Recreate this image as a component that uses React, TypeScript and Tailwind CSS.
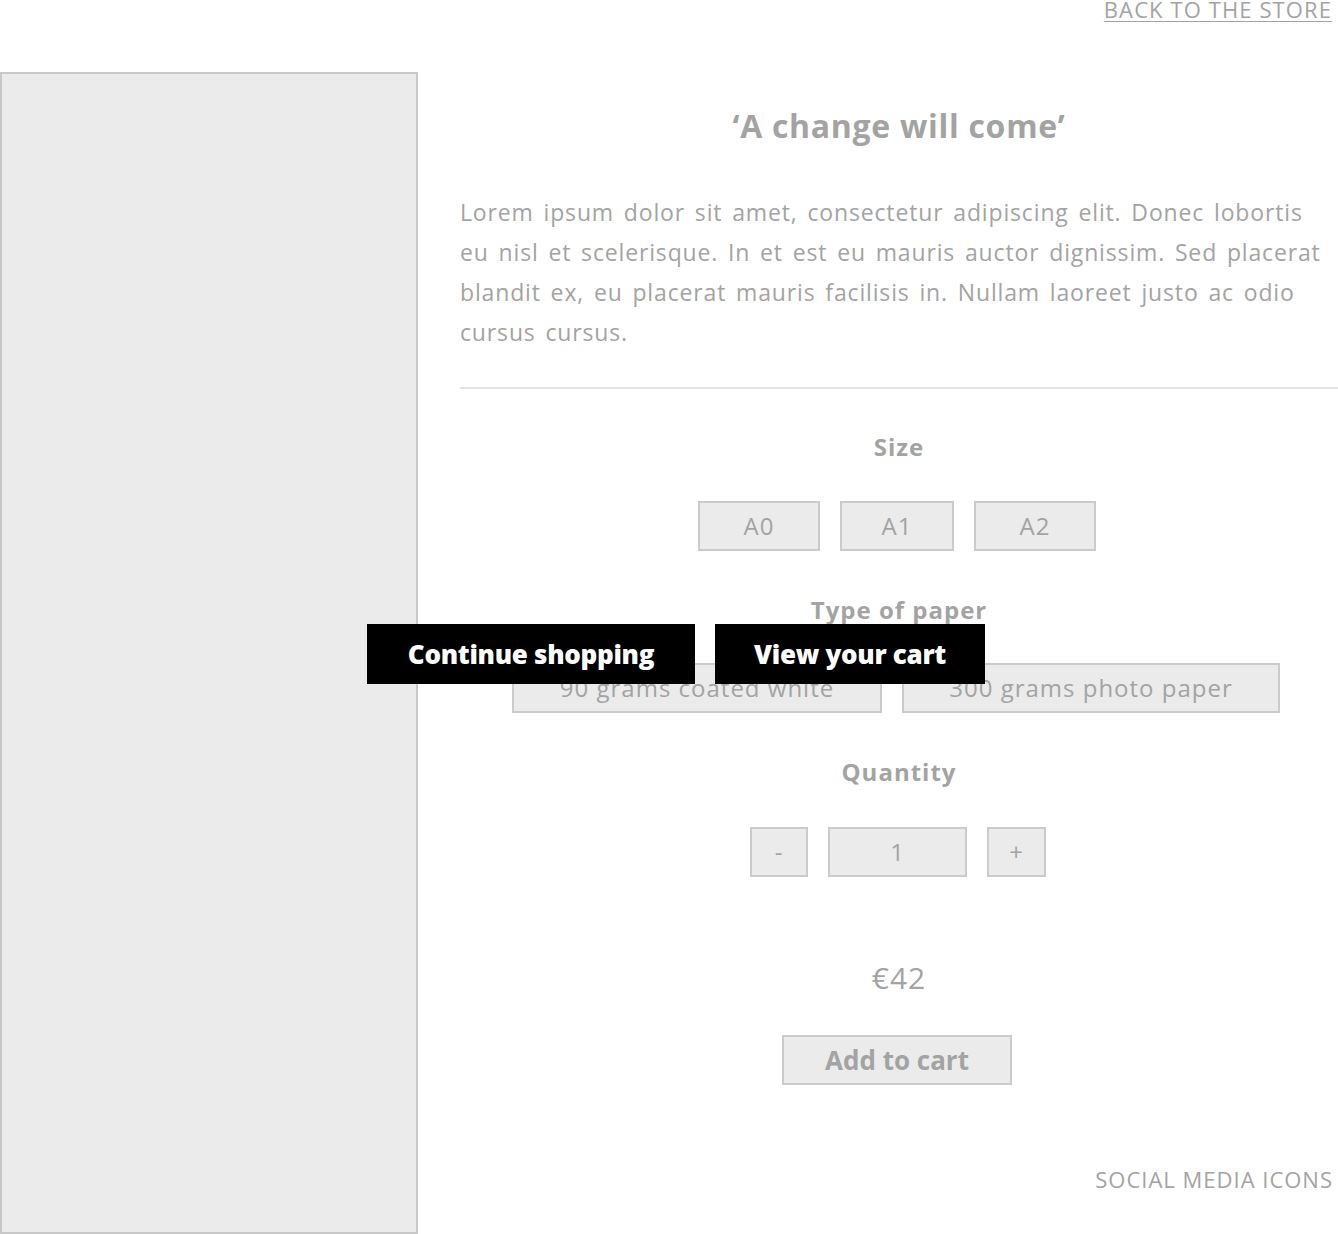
import React from "react";

const font = { fontFamily: '"Open Sans", "Liberation Sans", sans-serif' };

const OptionButton: React.FC<{ label: string; className?: string }> = ({
  label,
  className = "",
}) => (
  <button
    className={`h-[50px] border-2 border-[#cbcbcb] bg-[#ebebeb] text-[24px] tracking-[1px] text-[#a3a3a3] flex items-center justify-center ${className}`}
  >
    {label}
  </button>
);

const SectionLabel: React.FC<{ children: React.ReactNode }> = ({ children }) => (
  <h3 className="text-center text-[24px] font-bold text-[#a3a3a3] leading-none tracking-[1px]">
    {children}
  </h3>
);

export default function App() {
  return (
    <div className="relative w-[1338px] h-[1234px] bg-white overflow-hidden" style={font}>
      <div className="h-[72px] flex justify-end pr-[6px]">
        <a
          href="#"
          className="text-[22px] leading-none uppercase underline underline-offset-[3px] decoration-1 tracking-[1.1px] text-[#a3a3a3] -mt-[2px] h-fit"
        >
          Back to the store
        </a>
      </div>

      <div className="flex">
        <div className="w-[418px] h-[1162px] border-2 border-[#c8c8c8] bg-[#ebebeb] shrink-0" />

        <div className="flex-1 ml-[42px] flex flex-col">
          <h1 className="mt-[38px] text-center text-[32px] font-bold text-[#a3a3a3] leading-none tracking-[0.7px]">
            ‘A change will come’
          </h1>

          <p className="mt-[50px] text-[23px] leading-[40px] tracking-[0.85px] [word-spacing:3px] text-[#a3a3a3]">
            Lorem ipsum dolor sit amet, consectetur adipiscing elit. Donec lobortis eu nisl et
            scelerisque. In et est eu mauris auctor dignissim. Sed placerat blandit ex, eu placerat
            mauris facilisis in. Nullam laoreet justo ac odio cursus cursus.
          </p>

          <div className="mt-[35px] h-[2px] bg-[#e3e3e3]" />

          <div className="mt-[46px]">
            <SectionLabel>Size</SectionLabel>
          </div>
          <div className="mt-[42px] flex justify-center gap-[20px] pr-[4px]">
            <OptionButton label="A0" className="w-[122px]" />
            <OptionButton label="A1" className="w-[114px]" />
            <OptionButton label="A2" className="w-[122px]" />
          </div>

          <div className="mt-[47px]">
            <SectionLabel>Type of paper</SectionLabel>
          </div>
          <div className="mt-[41px] flex justify-center gap-[20px] pr-[6px]">
            <OptionButton label="90 grams coated white" className="w-[370px]" />
            <OptionButton label="300 grams photo paper" className="w-[378px]" />
          </div>

          <div className="mt-[47px]">
            <SectionLabel>Quantity</SectionLabel>
          </div>
          <div className="mt-[43px] flex justify-center gap-[20px] pr-[2px]">
            <OptionButton label="-" className="w-[58px]" />
            <OptionButton label="1" className="w-[139px]" />
            <OptionButton label="+" className="w-[59px]" />
          </div>

          <div className="mt-[86px] text-center text-[30px] leading-none tracking-[1px] text-[#a3a3a3]">
            €42
          </div>

          <div className="mt-[42px] flex justify-center pr-[4px]">
            <button className="w-[230px] h-[50px] border-2 border-[#cbcbcb] bg-[#ebebeb] text-[26px] font-bold text-[#a3a3a3]">
              Add to cart
            </button>
          </div>

          <div className="mt-[83px] flex justify-end pr-[5px]">
            <span className="text-[22px] leading-none uppercase tracking-[1px] text-[#a3a3a3]">
              Social media icons
            </span>
          </div>
        </div>
      </div>

      <div className="absolute left-[367px] top-[624px] flex gap-[20px]">
        <button className="w-[328px] h-[60px] bg-black text-white text-[26px] font-extrabold tracking-[-0.3px]">
          Continue shopping
        </button>
        <button className="w-[270px] h-[60px] bg-black text-white text-[26px] font-extrabold tracking-[-0.3px]">
          View your cart
        </button>
      </div>
    </div>
  );
}
